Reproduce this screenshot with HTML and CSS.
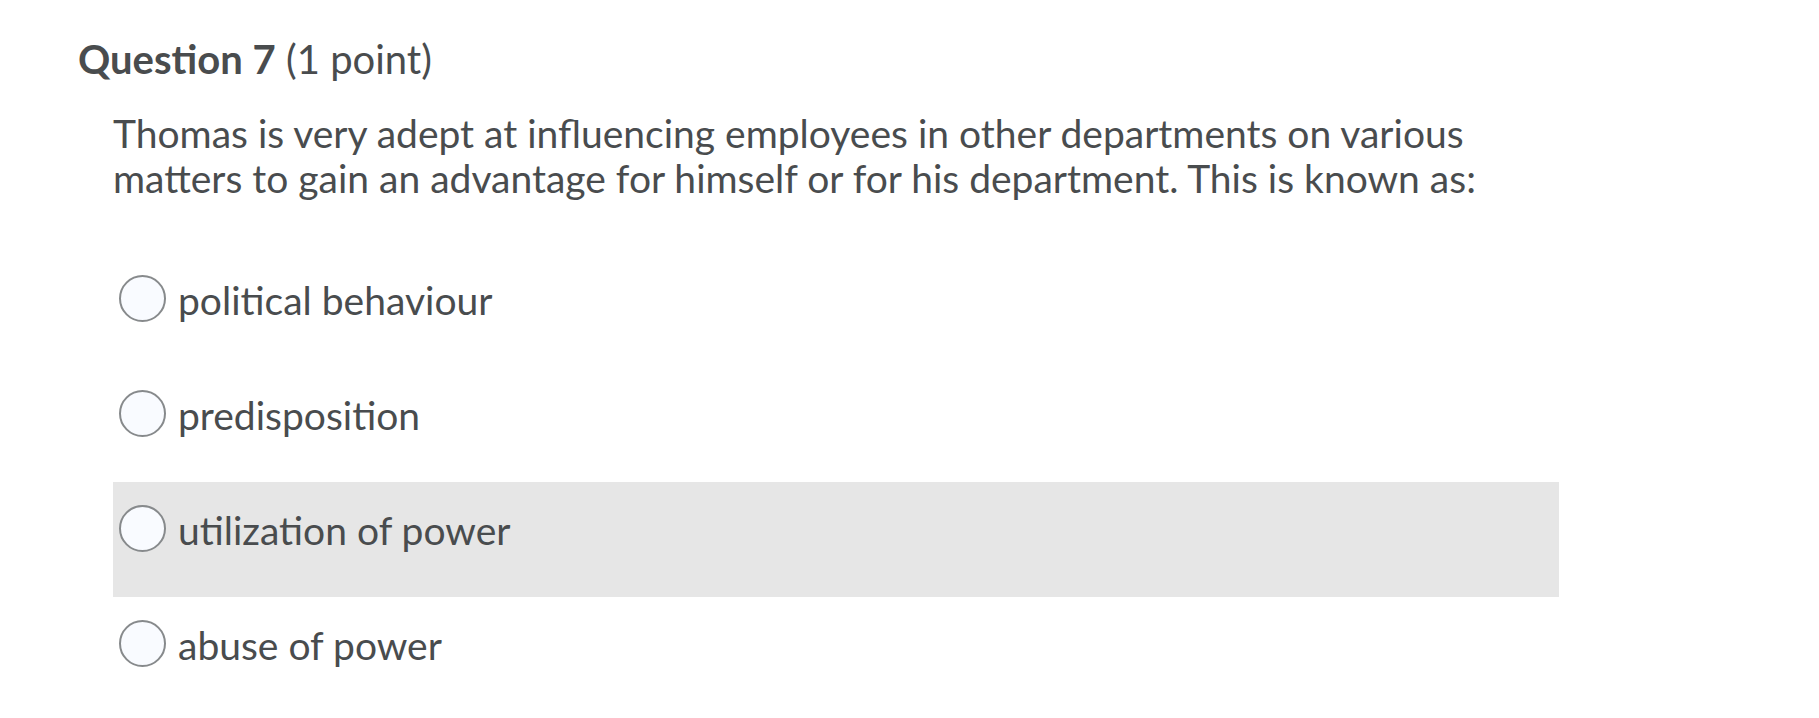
FILE: index.html
```html
<!DOCTYPE html>
<html lang="en">
<head>
    <meta charset="UTF-8">
    <meta name="viewport" content="width=device-width, initial-scale=1.0">
    <title>Question 7</title>
    <link rel="stylesheet" href="styles.css">
</head>
<body>
    <div class="quiz">
        <h2 class="q-title"><strong>Question 7</strong> (1 point)</h2>
        <div class="q-body">
            <p class="q-text">Thomas is very adept at influencing employees in other departments on various matters to gain an advantage for himself or for his department. This is known as:</p>

            <div class="choices">
                <label class="choice">
                    <input type="radio" name="q7" value="1">
                    <span class="choice-text">political behaviour</span>
                </label>
                <label class="choice">
                    <input type="radio" name="q7" value="2">
                    <span class="choice-text">predisposition</span>
                </label>
                <label class="choice hover">
                    <input type="radio" name="q7" value="3">
                    <span class="choice-text">utilization of power</span>
                </label>
                <label class="choice">
                    <input type="radio" name="q7" value="4">
                    <span class="choice-text">abuse of power</span>
                </label>
            </div>
        </div>
    </div>
</body>
</html>
```

FILE: styles.css
```css
* {
    box-sizing: border-box;
    margin: 0;
    padding: 0;
}

body {
    background-color: #fff;
    color: #494c4e;
    font-family: Lato, "Open Sans", sans-serif;
}

.quiz {
    padding: 37px 0 0 78px;
}

.q-title {
    font-size: 40px;
    font-weight: 400;
    line-height: 45px;
}

.q-title strong {
    font-weight: 700;
}

.q-body {
    margin: 29px 0 0 35px;
    width: 1446px;
}

.q-text {
    font-size: 39px;
    line-height: 45px;
    margin-bottom: 51px;
}

.choice {
    display: flex;
    align-items: flex-start;
    gap: 12px;
    height: 115px;
    padding: 23px 5px 0 6px;
    cursor: pointer;
}

.choice.hover,
.choice:hover {
    background-color: #e6e6e6;
}

.choice input {
    appearance: none;
    flex: none;
    width: 47px;
    height: 47px;
    border: 2px solid #878a8c;
    border-radius: 50%;
    background-color: #f9fbff;
    cursor: pointer;
}

.choice-text {
    font-size: 39px;
    line-height: 45px;
    margin-top: 3px;
}
```
